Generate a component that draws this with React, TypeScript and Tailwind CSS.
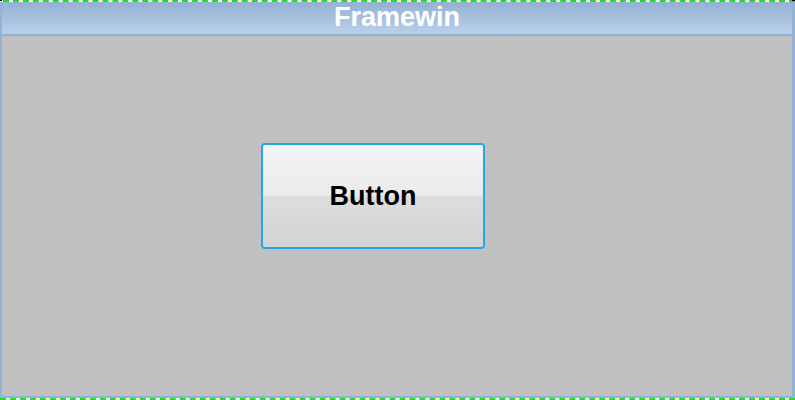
export default function App() {
  return (
    <div className="w-[795px] h-[400px] bg-white relative overflow-hidden" style={{ fontFamily: '"Liberation Sans", Arial, sans-serif' }}>
      {/* green dashed selection marks */}
      <div className="absolute left-[3px] right-0 top-0 h-[2px] border-t-2 border-dashed border-[#22dd22]" />
      <div className="absolute left-0 right-0 bottom-0 h-[2px] border-t-2 border-dashed border-[#22dd22]" />
      <div className="absolute left-0 top-0 w-[2px] h-[1px] bg-black" />
      <div className="absolute right-0 top-0 w-[3px] h-[1px] bg-black" />

      <div className="absolute left-0 top-[2px] w-[795px] h-[396px] flex flex-col border-l-2 border-r-[3px] border-b-2 border-[#94b2d6]">
        <div className="h-[34px] shrink-0 flex items-center justify-center bg-gradient-to-b from-[#95b1d3] to-[#b9d0e9] border-b-2 border-[#92b1d8]">
          <span className="text-white font-bold text-[27px] leading-none -mt-[1px]">Framewin</span>
        </div>
        <div className="flex-1 bg-[#c0c0c0] relative">
          <div className="absolute left-[259px] top-[107px] w-[224px] h-[106px] rounded-[4px] border-2 border-[#22a9e3] overflow-hidden flex flex-col">
            <div className="flex-1 bg-gradient-to-b from-[#f3f3f3] to-[#ebebeb]" />
            <div className="flex-1 bg-gradient-to-b from-[#dedede] to-[#d2d2d2]" />
            <div className="absolute inset-0 flex items-center justify-center">
              <span className="text-black font-bold text-[27px] leading-none">Button</span>
            </div>
          </div>
        </div>
      </div>
    </div>
  );
}
